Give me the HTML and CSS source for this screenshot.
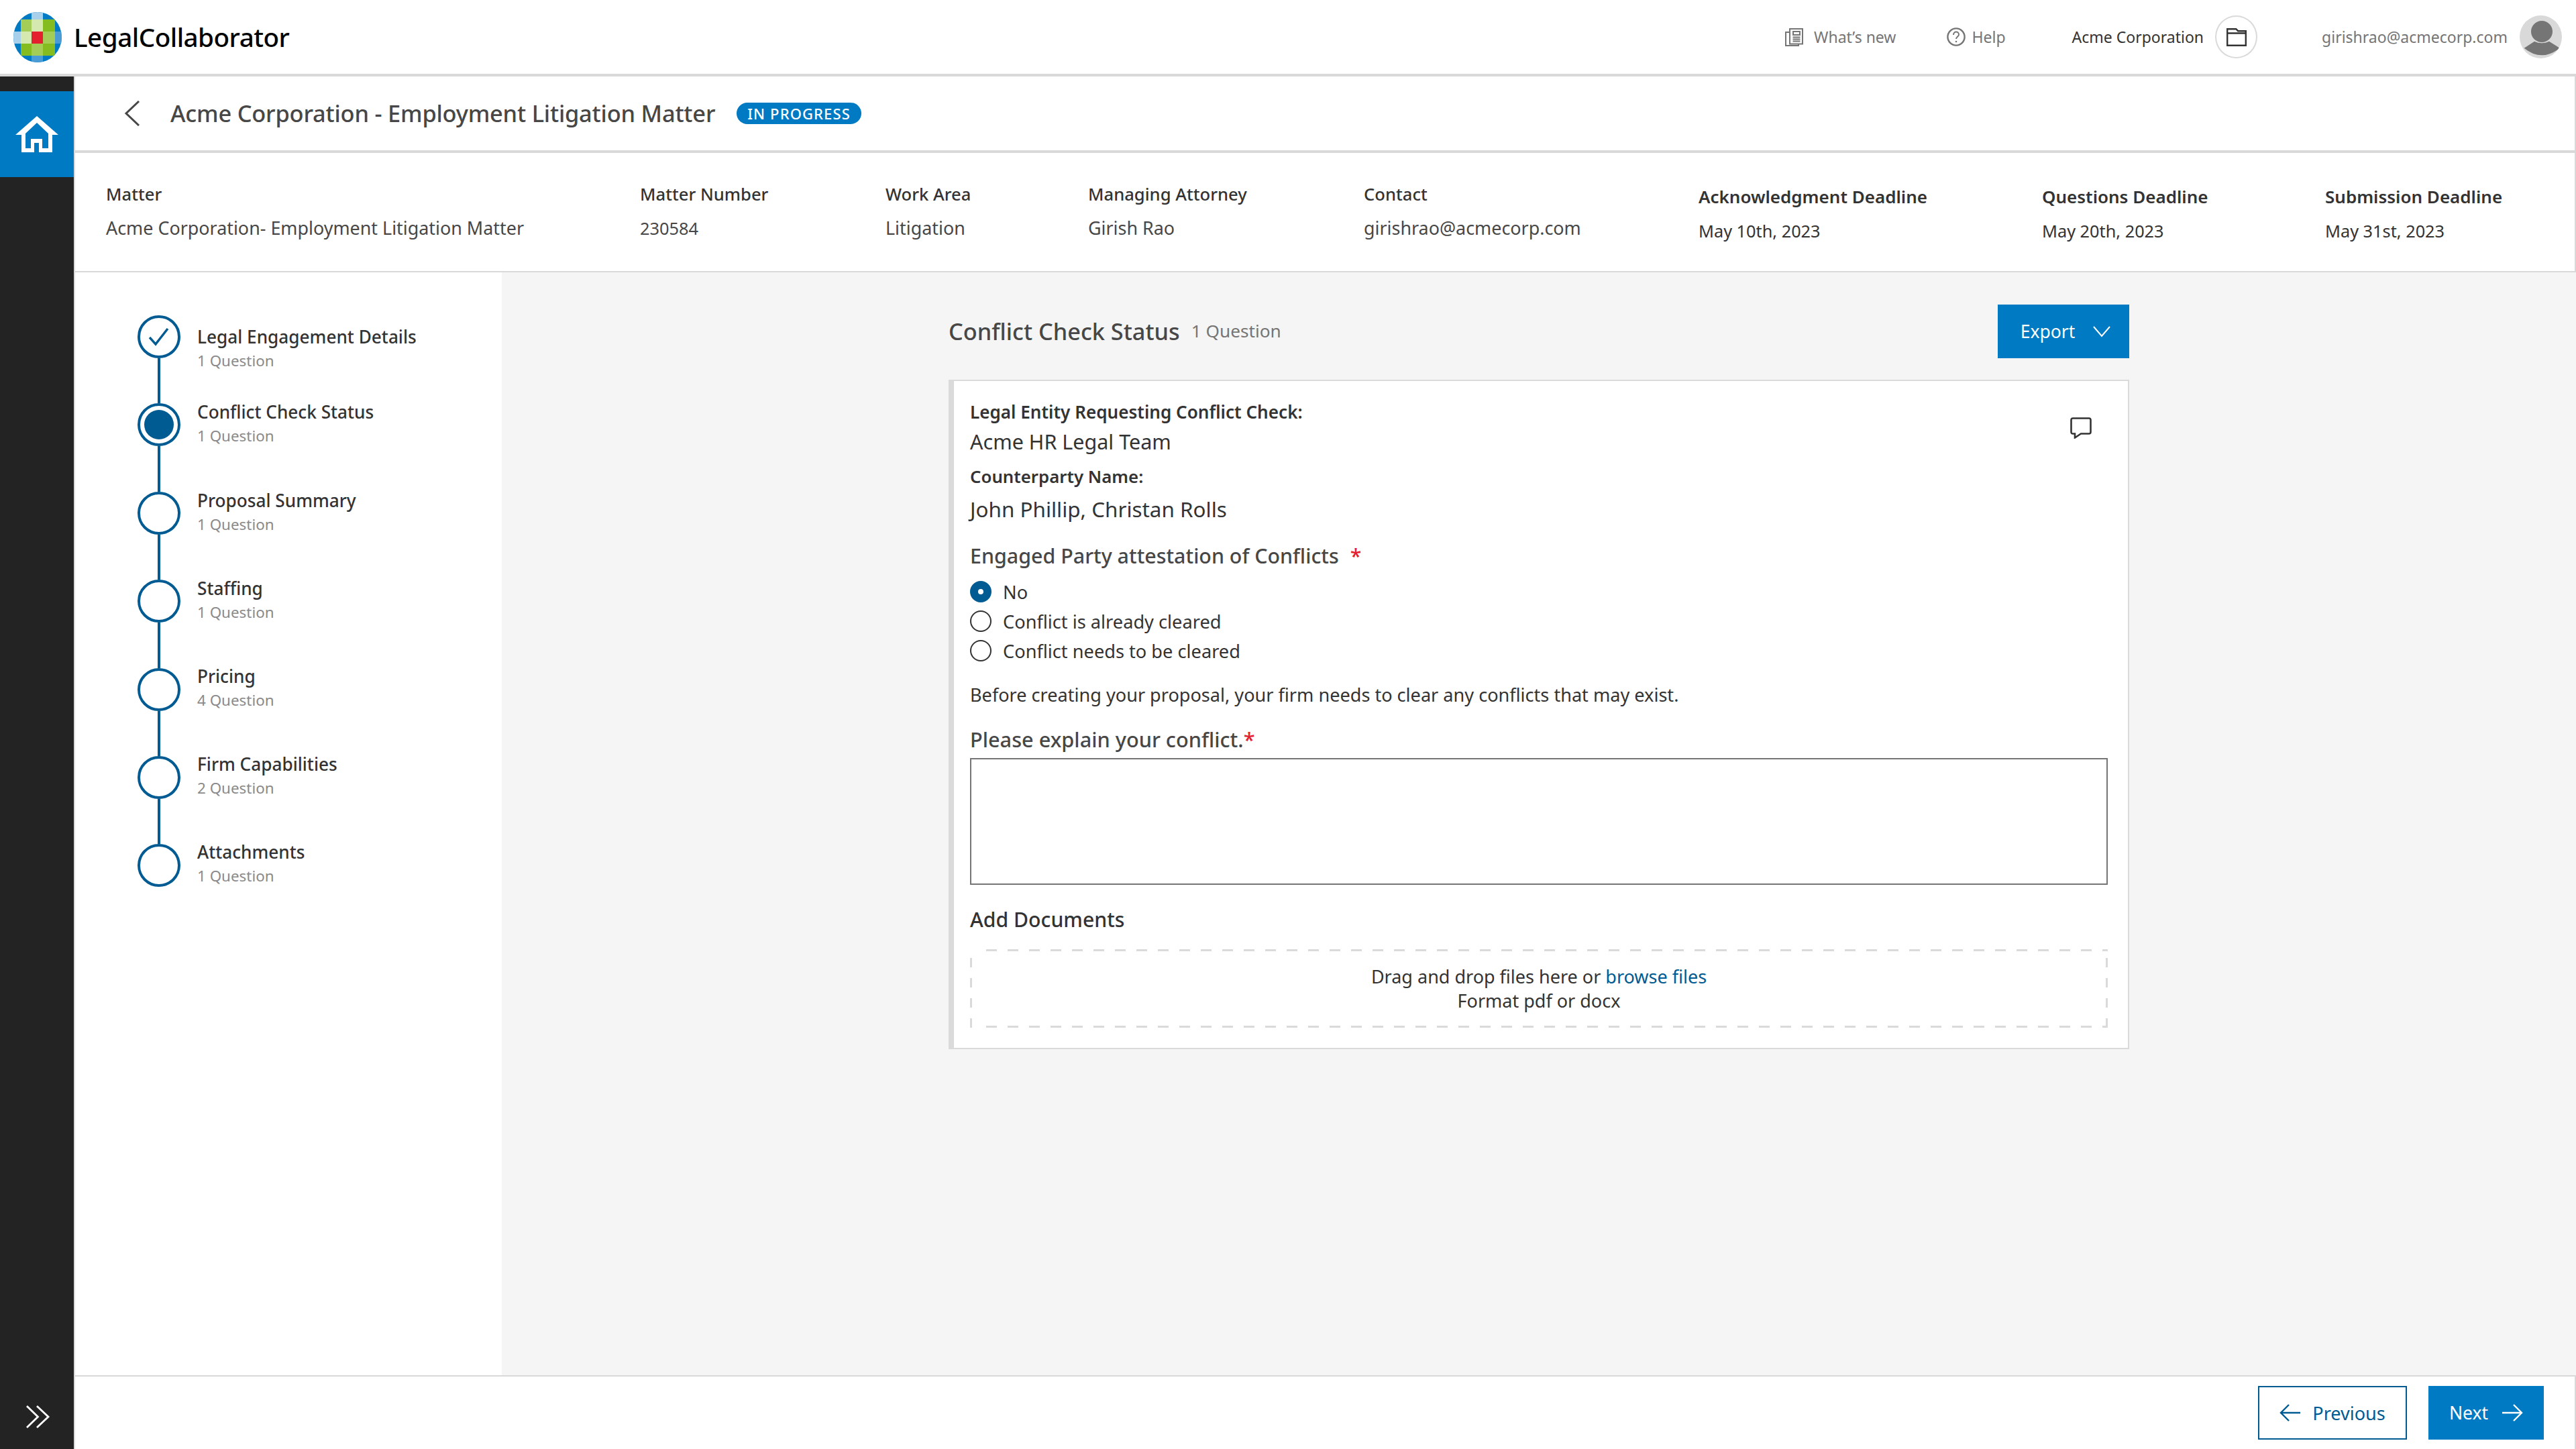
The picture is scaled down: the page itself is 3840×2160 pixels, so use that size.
FILE: index.html
```html
<!DOCTYPE html>
<html lang="en">
<head>
<meta charset="utf-8">
<title>LegalCollaborator</title>
<link rel="stylesheet" href="styles.css">
</head>
<body>
<header class="topbar">
  <div class="brand">
    <svg class="logo" viewBox="20 17 72 75" width="72" height="75">
      <defs><clipPath id="globe"><ellipse cx="56" cy="54.5" rx="36" ry="37.5"/></clipPath></defs>
      <g clip-path="url(#globe)">
        <rect x="20" y="17" width="72" height="75" fill="#007ac3"/>
        <rect x="47" y="17" width="17" height="11" fill="#a9d0ea"/>
        <rect x="20" y="46" width="11" height="18" fill="#a9d0ea"/>
        <rect x="82" y="46" width="10" height="18" fill="#4a9cd6"/>
        <rect x="47" y="82" width="17" height="10" fill="#4a9cd6"/>
        <rect x="31" y="28" width="16" height="18" fill="#a4cd58"/>
        <rect x="47" y="28" width="17" height="18" fill="#d4e8b0"/>
        <rect x="64" y="28" width="18" height="18" fill="#85bc20"/>
        <rect x="31" y="46" width="16" height="18" fill="#d4e8b0"/>
        <rect x="47" y="46" width="17" height="18" fill="#e5202e"/>
        <rect x="64" y="46" width="18" height="18" fill="#a4cd58"/>
        <rect x="31" y="64" width="16" height="18" fill="#85bc20"/>
        <rect x="47" y="64" width="17" height="18" fill="#a4cd58"/>
        <rect x="64" y="64" width="18" height="18" fill="#85bc20"/>
      </g>
    </svg>
    <span class="brand-name">LegalCollaborator</span>
  </div>
  <nav class="topnav">
    <a class="toplink news">
      <svg viewBox="0 0 27 27" width="27" height="27" fill="none" stroke="#757575" stroke-width="2"><rect x="7" y="1" width="19" height="22.500"/><path d="M7 6H1v20h19v-2.500"/><rect x="12" y="5" width="10" height="5"/><path d="M11.500 13.500h11M11.500 16.500h11M11.500 19.500h11"/></svg>
      <span>What’s new</span>
    </a>
    <a class="toplink help">
      <svg viewBox="0 0 28 28" width="28" height="28" fill="none" stroke="#757575" stroke-width="2.400"><circle cx="14" cy="14" r="12.600"/><path d="M10 11c0-3 2-4.500 4-4.500s4 1.500 4 4c0 3-4 3.500-4 6.500" stroke-width="2"/><circle cx="14" cy="21" r="1.300" fill="#757575" stroke="none"/></svg>
      <span>Help</span>
    </a>
    <span class="org">Acme Corporation</span>
    <span class="round folder">
      <svg viewBox="0 0 30 27" width="30" height="27" fill="none" stroke="#333" stroke-width="2.400"><path d="M1.200 25.800V1.200h13l3 3h11.600v21.600zM1.200 7.500h27.600"/></svg>
    </span>
    <span class="email">girishrao@acmecorp.com</span>
    <span class="round avatar">
      <svg viewBox="0 0 63 64" width="63" height="64"><circle cx="33" cy="24" r="16" fill="#757575"/><path d="M6.700 48.700 22 38.700Q33 44 44 38.700L59.700 48.700Q33 70 6.700 48.700z" fill="#757575"/></svg>
    </span>
  </nav>
</header>

<div class="shell">
  <aside class="rail">
    <a class="rail-home">
      <svg viewBox="22 172 64 54" width="64" height="54"><path fill="#fff" fill-rule="evenodd" d="M54 172 86 200H77V226H57V212H50V226H31V200H22ZM54 182 37 198V220H45V206H62V220H71V198Z"/></svg>
    </a>
    <a class="rail-expand">
      <svg viewBox="0 0 36 36" width="36" height="36" fill="none" stroke="#fff" stroke-width="2.800"><path d="M1 2 17.500 18 1 34M16 2 33 18 16 34"/></svg>
    </a>
  </aside>

  <main class="page">
    <section class="titlebar">
      <svg class="back" viewBox="0 0 24 38" width="24" height="38" fill="none" stroke="#474747" stroke-width="3"><path d="M22 1 3 19 22 37"/></svg>
      <h1 class="matter-title">Acme Corporation - Employment Litigation Matter</h1>
      <span class="badge">IN PROGRESS</span>
    </section>

    <section class="meta">
      <div class="meta-item"><div class="meta-label">Matter</div><div class="meta-value">Acme Corporation- Employment Litigation Matter</div></div>
      <div class="meta-item"><div class="meta-label">Matter Number</div><div class="meta-value number">230584</div></div>
      <div class="meta-item"><div class="meta-label">Work Area</div><div class="meta-value">Litigation</div></div>
      <div class="meta-item"><div class="meta-label">Managing Attorney</div><div class="meta-value">Girish Rao</div></div>
      <div class="meta-item"><div class="meta-label">Contact</div><div class="meta-value">girishrao@acmecorp.com</div></div>
      <div class="meta-item deadline"><div class="meta-label">Acknowledgment Deadline</div><div class="meta-value">May 10th, 2023</div></div>
      <div class="meta-item deadline"><div class="meta-label">Questions Deadline</div><div class="meta-value">May 20th, 2023</div></div>
      <div class="meta-item deadline"><div class="meta-label">Submission Deadline</div><div class="meta-value">May 31st, 2023</div></div>
    </section>

    <div class="content">
      <ol class="steps">
        <li class="step first">
          <div class="track"><span class="dot"><svg viewBox="0 0 32 28" width="32" height="28" fill="none" stroke="#005b92" stroke-width="3.400"><path d="M2 15 11 25 29 2"/></svg></span><span class="line"></span></div>
          <div class="step-text"><div class="step-name">Legal Engagement Details</div><div class="step-sub">1 Question</div></div>
        </li>
        <li class="step">
          <div class="track"><span class="dot current"><span class="dot-fill"></span></span><span class="line"></span></div>
          <div class="step-text"><div class="step-name">Conflict Check Status</div><div class="step-sub">1 Question</div></div>
        </li>
        <li class="step">
          <div class="track"><span class="dot"></span><span class="line"></span></div>
          <div class="step-text"><div class="step-name">Proposal Summary</div><div class="step-sub">1 Question</div></div>
        </li>
        <li class="step">
          <div class="track"><span class="dot"></span><span class="line"></span></div>
          <div class="step-text"><div class="step-name">Staffing</div><div class="step-sub">1 Question</div></div>
        </li>
        <li class="step lower">
          <div class="track"><span class="dot"></span><span class="line"></span></div>
          <div class="step-text"><div class="step-name">Pricing</div><div class="step-sub">4 Question</div></div>
        </li>
        <li class="step lower">
          <div class="track"><span class="dot"></span><span class="line"></span></div>
          <div class="step-text"><div class="step-name">Firm Capabilities</div><div class="step-sub">2 Question</div></div>
        </li>
        <li class="step lower">
          <div class="track"><span class="dot"></span></div>
          <div class="step-text"><div class="step-name">Attachments</div><div class="step-sub">1 Question</div></div>
        </li>
      </ol>

      <div class="work">
        <div class="work-inner">
          <div class="work-head">
            <h2 class="work-title">Conflict Check Status</h2>
            <span class="work-count">1 Question</span>
            <button class="btn primary export">Export
              <svg viewBox="0 0 26 17" width="26" height="17" fill="none" stroke="#fff" stroke-width="2"><path d="M1 1 13 15 25 1"/></svg>
            </button>
          </div>

          <article class="card">
            <svg class="comment" viewBox="0 0 32 32" width="32" height="32" fill="none" stroke="#333" stroke-width="2.600"><path d="M4 1.500h24q2.500 0 2.500 2.500v18q0 2.500-2.500 2.500H16L7 30.500v-6H4q-2.500 0-2.500-2.500V4q0-2.500 2.500-2.500z"/></svg>
            <div class="fact-label">Legal Entity Requesting Conflict Check:</div>
            <div class="fact-value">Acme HR Legal Team</div>
            <div class="fact-label second">Counterparty Name:</div>
            <div class="fact-value second">John Phillip, Christan Rolls</div>

            <div class="field-title attest">Engaged Party attestation of Conflicts<span class="req spaced">*</span></div>
            <div class="radios">
              <label class="radio"><span class="radio-mark on"></span>No</label>
              <label class="radio"><span class="radio-mark"></span>Conflict is already cleared</label>
              <label class="radio"><span class="radio-mark"></span>Conflict needs to be cleared</label>
            </div>
            <p class="note">Before creating your proposal, your firm needs to clear any conflicts that may exist.</p>

            <div class="field-title explain">Please explain your conflict.<span class="req">*</span></div>
            <div class="textarea"></div>

            <div class="docs-title">Add Documents</div>
            <div class="drop">
              <div>Drag and drop files here or <a class="link">browse files</a></div>
              <div>Format pdf or docx</div>
            </div>
          </article>
        </div>
      </div>
    </div>

    <footer class="footer">
      <button class="btn outline">
        <svg viewBox="0 0 32 26" width="32" height="26" fill="none" stroke="#005b92" stroke-width="2.400"><path d="M31 13H2M14 1 2 13l12 12"/></svg>
        Previous
      </button>
      <button class="btn primary next">Next
        <svg viewBox="0 0 32 26" width="32" height="26" fill="none" stroke="#fff" stroke-width="2.400"><path d="M1 13h29M18 1l12 12-12 12"/></svg>
      </button>
    </footer>
  </main>
</div>
</body>
</html>
```
FILE: styles.css
```css
* { box-sizing: border-box; }
html, body { margin: 0; padding: 0; }
body {
  width: 3840px; height: 2160px; overflow: hidden;
  display: flex; flex-direction: column;
  font-family: "Noto Sans", "Open Sans", sans-serif;
  font-size: 25px; color: #333; background: #fff;
}
a { text-decoration: none; color: inherit; }
h1, h2, p, ol { margin: 0; padding: 0; }

/* top bar */
.topbar {
  height: 114px; flex: none;
  border-bottom: 4px solid #d9d9d9;
  display: flex; align-items: center; justify-content: space-between;
  padding: 0 21px 0 20px;
}
.brand { display: flex; align-items: center; gap: 18px; }
.logo { display: block; }
.brand-name { font-size: 38.6px; font-weight: 500; color: #000; letter-spacing: -0.5px; }
.topnav { display: flex; align-items: center; font-size: 23px; color: #757575; }
.toplink { display: flex; align-items: center; }
.news { gap: 16px; }
.help { gap: 9px; margin-left: 76px; }
.org { color: #333; margin-left: 99px; }
.round { width: 63px; height: 64px; border-radius: 50%; display: flex; align-items: center; justify-content: center; overflow: hidden; }
.folder { border: 2px solid #dadada; margin-left: 17px; }
.email { margin-left: 96px; }
.avatar { background: #d9d9d9; margin-left: 18px; }

/* shell */
.shell { flex: 1; display: flex; min-height: 0; }
.rail { width: 110px; flex: none; background: #232323; display: flex; flex-direction: column; justify-content: space-between; padding: 22px 0 30px; }
.rail-home { height: 128px; background: #007ac3; display: flex; align-items: center; justify-content: center; }
.rail-expand { display: block; padding-left: 39px; height: 36px; }
.page { flex: 1; display: flex; flex-direction: column; min-width: 0; border-left: 2px solid #d9d9d9; }

/* title bar */
.titlebar { height: 114px; flex: none; border-bottom: 4px solid #d9d9d9; border-right: 2px solid #d9d9d9; display: flex; align-items: center; padding-left: 73px; }
.back { display: block; }
.matter-title { font-size: 34.4px; font-weight: 500; color: #474747; margin: -2px 0 0 45px; letter-spacing: -0.2px; }
.badge { margin-left: 32px; height: 32px; padding: 0 16px; border-radius: 16px; background: #007ac3; color: #fff; font-size: 22px; font-weight: 500; letter-spacing: 1.1px; display: flex; align-items: center; }

/* meta */
.meta {
  height: 178px; flex: none;
  border-bottom: 2px solid #d9d9d9; border-right: 2px solid #d9d9d9;
  display: grid; grid-template-columns: 796px 366px 302px 411px 499px 512px 422px auto;
  padding: 44px 0 0 46px;
}
.meta-label { font-size: 25.6px; font-weight: 500; line-height: 36px; color: #333; }
.meta-value { font-size: 26.9px; line-height: 36px; margin-top: 14px; color: #474747; }
.meta-value.number { font-size: 25.4px; }
.deadline { padding-top: 3px; }
.deadline .meta-label { font-size: 26px; font-weight: 600; }
.deadline .meta-value { font-size: 25.3px; margin-top: 15px; color: #333; }

/* content */
.content { flex: 1; display: flex; min-height: 0; background: #f5f5f5; }
.steps { width: 636px; flex: none; background: #fff; list-style: none; padding: 64px 0 0 93px; }
.step { display: flex; height: 131.4px; }
.track { width: 64px; flex: none; display: flex; flex-direction: column; align-items: center; }
.dot { width: 64px; height: 64px; flex: none; border-radius: 50%; border: 4px solid #005b92; display: flex; align-items: center; justify-content: center; background: #fff; }
.dot-fill { width: 44px; height: 44px; border-radius: 50%; background: #005b92; }
.line { width: 4px; flex: 1; background: #005b92; }
.step-text { margin-left: 25px; margin-top: -3px; }
.first .step-text { margin-top: 16px; }
.lower .step-text { margin-top: -4px; }
.step-name { font-size: 26.2px; font-weight: 500; line-height: 32px; color: #333; }
.step-sub { font-size: 22.4px; line-height: 40px; color: #8a8a8a; }

.work { flex: 1; min-width: 0; padding-top: 48px; }
.work-inner { width: 1760px; margin: 0 auto; }
.work-head { height: 80px; display: flex; align-items: center; margin-bottom: 32px; }
.work-title { font-size: 34.3px; font-weight: 500; color: #474747; margin-top: -2px; }
.work-count { font-size: 26.2px; color: #757575; margin: -2px 0 0 17px; }

.btn { font-family: inherit; font-size: 26.5px; height: 80px; border: 0; border-radius: 0; display: flex; align-items: center; justify-content: center; padding: 0; }
.primary { background: #007ac3; color: #fff; }
.export { width: 196px; margin-left: auto; gap: 27px; padding-left: 6px; }
.outline { width: 222px; background: #fff; border: 2px solid #005b92; color: #005b92; gap: 17px; font-size: 27px; }
.next { width: 172px; gap: 20px; }

/* card */
.card { position: relative; background: #fff; border: 2px solid #dadada; border-left-width: 8px; padding: 28px 30px 30px 24px; height: 998px; }
.comment { position: absolute; right: 54px; top: 54px; }
.fact-label { font-size: 26.1px; font-weight: 600; line-height: 36px; color: #333; }
.fact-value { font-size: 30.5px; line-height: 40px; color: #333; margin-top: 6px; }
.fact-label.second { margin-top: 14px; font-size: 25.8px; }
.fact-value.second { margin-top: 11px; font-size: 31.4px; }
.field-title { font-size: 30.4px; font-weight: 500; line-height: 40px; color: #474747; }
.attest { margin-top: 30px; }
.req { color: #e5202e; }
.req.spaced { margin-left: 17px; }
.radios { margin-top: 11px; display: flex; flex-direction: column; }
.radio { display: flex; align-items: center; height: 44px; font-size: 27.2px; color: #333; }
.radio-mark { width: 32px; height: 32px; border-radius: 50%; border: 2px solid #333; margin-right: 17px; background: #fff; flex: none; }
.radio-mark.on { border: 12px solid #005b92; }
.note { font-size: 27.1px; line-height: 36px; margin-top: 26px; color: #333; }
.explain { margin-top: 30px; line-height: 36px; font-size: 30.7px; }
.textarea { height: 189px; border: 2px solid #757575; margin-top: 10px; background: #fff; }
.docs-title { font-size: 30.2px; font-weight: 500; line-height: 40px; margin-top: 32px; color: #333; }
.drop {
  height: 117px; margin-top: 24px; text-align: center; font-size: 27px; line-height: 36px; color: #333;
  display: flex; flex-direction: column; justify-content: center;
  background:
    repeating-linear-gradient(90deg, #dadada 0 16px, transparent 16px 32px) 24px 0 / 100% 3px no-repeat,
    repeating-linear-gradient(90deg, #dadada 0 16px, transparent 16px 32px) 24px 100% / 100% 3px no-repeat,
    repeating-linear-gradient(0deg, #dadada 0 14px, transparent 14px 30px) 0 0 / 3px 100% no-repeat,
    repeating-linear-gradient(0deg, #dadada 0 14px, transparent 14px 30px) 100% 0 / 3px 100% no-repeat;
}
.link { color: #005b92; }

/* footer */
.footer { height: 110px; flex: none; border-top: 2px solid #d9d9d9; border-right: 2px solid #d9d9d9; background: #fff; display: flex; justify-content: flex-end; gap: 32px; padding: 14px 46px 0 0; }
```
